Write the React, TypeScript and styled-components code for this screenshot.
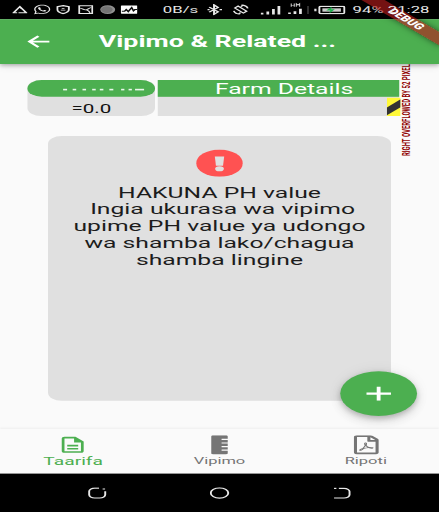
import React from 'react';
import styled, { createGlobalStyle } from 'styled-components';
import { MdOutlineDescription } from 'react-icons/md';
import { FaRegFilePdf, FaRulerVertical, FaWhatsapp } from 'react-icons/fa';

const GREEN = '#4caf50';
const GREY = '#e0e0e0';

const GlobalStyle = createGlobalStyle`
  body { margin: 0; background: #fafafa; overflow: hidden; }
  * { box-sizing: border-box; }
  svg { display: block; flex: none; }
`;

const Viewport = styled.div`
  width: 439px;
  height: 512px;
  overflow: hidden;
`;

/* The device screen is 320x640 logical pixels, stretched to fill the viewport. */
const Screen = styled.div`
  position: relative;
  width: 320px;
  height: 640px;
  display: flex;
  flex-direction: column;
  overflow: hidden;
  background: #fafafa;
  font-family: Roboto, 'Noto Sans', sans-serif;
  transform: scale(1.371875, 0.8);
  transform-origin: 0 0;
`;

const StatusBar = styled.header`
  flex: none;
  height: 24px;
  display: flex;
  align-items: center;
  background: #000;
  color: #e8e8e8;
`;

const StatusItem = styled.div<{ $w: number; $gap: number }>`
  flex: none;
  width: ${(p) => p.$w}px;
  margin-left: ${(p) => p.$gap}px;
  display: flex;
  justify-content: center;
  font-size: 12.2px;
  line-height: 24px;
  white-space: nowrap;
`;

const FrontItem = styled(StatusItem)`
  position: relative;
  z-index: 6;
`;

const AppBar = styled.div`
  position: relative;
  z-index: 2;
  flex: none;
  height: 56px;
  display: grid;
  grid-template-columns: 56px 1fr 56px;
  align-items: center;
  justify-items: center;
  background: ${GREEN};
  color: #fff;
  box-shadow: 0 2px 4px rgba(0, 0, 0, 0.28), 0 1px 8px rgba(0, 0, 0, 0.12);
`;

const Title = styled.h1`
  margin: 0 3px 0 0;
  font-size: 19.5px;
  font-weight: 700;
  white-space: nowrap;
`;

const Body = styled.main`
  flex: 1;
  min-height: 0;
  padding-top: 20px;
`;

const Table = styled.div`
  position: relative;
  display: flex;
  width: 271.5px;
  margin-left: 20px;
  height: 45px;
  gap: 1.4px;
`;

const Column = styled.section<{ $w: number; $round?: boolean }>`
  flex: none;
  width: ${(p) => p.$w}px;
  background: ${GREY};
  border-radius: ${(p) => (p.$round ? '10px' : '0')};
`;

const ColumnHead = styled.div<{ $round?: boolean }>`
  height: 21.3px;
  display: flex;
  align-items: center;
  justify-content: center;
  background: ${GREEN};
  color: #fff;
  font-size: 18px;
  line-height: 21px;
  border-radius: ${(p) => (p.$round ? '10.6px' : '0')};
`;

const HeadText = styled.span`
  padding-left: 8px;
`;

const Cell = styled.div`
  height: 23.7px;
  padding-top: 6px;
  display: flex;
  align-items: center;
  justify-content: center;
  color: #111;
  font-size: 15px;
`;

const OverflowStripe = styled.svg`
  position: absolute;
  right: 0;
  bottom: 0;
`;

const OverflowLabel = styled.div`
  position: absolute;
  left: 273px;
  top: -28px;
  height: 123px;
  writing-mode: vertical-rl;
  transform: rotate(180deg);
  color: #900000;
  font-size: 7.5px;
  font-weight: 700;
  line-height: 7px;
  white-space: nowrap;
`;

const Card = styled.section`
  width: 250px;
  height: 331px;
  margin: 25px auto 0;
  padding-top: 17px;
  display: flex;
  flex-direction: column;
  align-items: center;
  background: ${GREY};
  border-radius: 10px;
`;

const Message = styled.p`
  margin: 9px 0 0;
  color: #1c1c1c;
  font-size: 18px;
  line-height: 21px;
  text-align: center;
  white-space: pre;
`;

const Fab = styled.button`
  position: absolute;
  z-index: 3;
  left: 248px;
  top: 464px;
  width: 56px;
  height: 56px;
  padding: 0;
  border: 0;
  border-radius: 50%;
  display: flex;
  align-items: center;
  justify-content: center;
  background: ${GREEN};
  box-shadow: 0 3px 5px rgba(0, 0, 0, 0.18), 0 6px 10px rgba(0, 0, 0, 0.12), 0 1px 14px rgba(0, 0, 0, 0.07);
`;

const Tabs = styled.nav`
  flex: none;
  height: 56px;
  display: grid;
  grid-template-columns: repeat(3, 1fr);
  background: #fafafa;
  box-shadow: 0 -1px 2px rgba(0, 0, 0, 0.06);
`;

const Tab = styled.a<{ $active?: boolean }>`
  display: flex;
  flex-direction: column;
  align-items: center;
  padding-top: 8px;
  color: ${(p) => (p.$active ? GREEN : '#757575')};
  font-size: ${(p) => (p.$active ? 14 : 12)}px;
`;

const TabLabel = styled.span`
  line-height: 16px;
`;

const SystemBar = styled.footer`
  flex: none;
  height: 48px;
  padding: 0 17.5px;
  display: grid;
  grid-template-columns: 107px 1fr 107px;
  align-items: center;
  justify-items: center;
  background: #000;
`;

const Ribbon = styled.div`
  position: absolute;
  z-index: 5;
  left: 320px;
  top: 0;
  width: 80px;
  height: 12px;
  transform-origin: 0 0;
  transform: rotate(45deg) translate(-40px, 28px);
  background: rgba(183, 28, 28, 0.63);
  box-shadow: 0 0 6px rgba(0, 0, 0, 0.5);
  color: #fff;
  font-size: 10.2px;
  font-weight: 900;
  line-height: 12px;
  text-align: center;
`;

const DASHES: [number, number][] = [
  [0, 2.9], [6.5, 2.6], [13.2, 2.6], [19.8, 2.6], [25, 2.6], [31.5, 2.9], [39.5, 2.4], [44.6, 2.4], [49, 6.6],
];

const stroke = { fill: 'none', stroke: '#e8e8e8', strokeWidth: 1.4 };

const App: React.FC = () => (
  <Viewport>
    <GlobalStyle />
    <Screen>
      <StatusBar>
        <StatusItem $w={11} $gap={8.6}>
          <svg width="11" height="12" viewBox="0 0 11 12"><path d="M1 9.8 5.5 2.2 10 9.8M0 10h3.5M4.5 10H11M5 2l2 3.2" {...stroke} /></svg>
        </StatusItem>
        <StatusItem $w={12} $gap={4.9}><FaWhatsapp size={13.5} /></StatusItem>
        <StatusItem $w={10} $gap={4.7}>
          <svg width="10" height="12" viewBox="0 0 10 12"><path d="M5 1 9.2 2.4V6c0 2.5-1.8 4.2-4.2 5C2.6 10.2.8 8.5.8 6V2.4Z" {...stroke} /><path d="M3.3 6.7h3.4M4 4.7h2" {...stroke} strokeWidth=".8" /></svg>
        </StatusItem>
        <StatusItem $w={11} $gap={5.6}>
          <svg width="11" height="12" viewBox="0 0 11 12"><path d="M.7 1.2h9.6v9.6H.7Z" {...stroke} /><path d="M1.5 4.5c2 0 2 1.8 3.8 1.8S7.5 4 9.5 3.6M6 6.3c1.4.5 2.2 1.8 2.6 3.8" {...stroke} strokeWidth="1.1" /></svg>
        </StatusItem>
        <StatusItem $w={11} $gap={5}>
          <svg width="11" height="12" viewBox="0 0 11 12"><circle cx="5.5" cy="6" r="5.5" fill="#909090" /><circle cx="4.9" cy="6" r="4.2" fill="#747474" /></svg>
        </StatusItem>
        <StatusItem $w={12.5} $gap={4}>
          <svg width="12.5" height="12" viewBox="0 0 12.5 12"><rect y=".8" width="12.5" height="10.4" rx=".8" fill="#fff" /><path d="M.8 8h2l1.2-2 1.5 2.5L8 3.5l1.3 4 1-1.5h1.8" fill="none" stroke="#111" strokeWidth="1.3" /></svg>
        </StatusItem>
        <StatusItem $w={25} $gap={18.8}>0B/s</StatusItem>
        <StatusItem $w={11} $gap={6.5}>
          <svg width="11" height="14" viewBox="0 0 11 14"><path d="m1.5 3.8 6.5 6L5 13V1l3 3.2-6.5 6M.2 7h1.6M9 7h1.8" {...stroke} strokeWidth="1.4" /></svg>
        </StatusItem>
        <StatusItem $w={13} $gap={7}>
          <svg width="13" height="14" viewBox="0 0 13 14"><path d="M4.6 2.6 10.8 9 8.4 11.4 2.2 5ZM7 1.4c2.3 0 4 1.5 4.6 4M6 12.6c-2.3 0-4-1.5-4.6-4M6.6 3.2 8.6 1M6.4 10.8 4.4 13" {...stroke} strokeWidth="1.3" /></svg>
        </StatusItem>
        <StatusItem $w={15} $gap={8.5}>
          <svg width="15" height="13" viewBox="0 0 15 13"><path d="M0 10h2v2H0ZM4.2 8.5h2V12h-2ZM8.3 5.2h2V12h-2ZM12.3 1.5h2V12h-2Z" fill="#e8e8e8" /></svg>
        </StatusItem>
        <StatusItem $w={16} $gap={4.5}>
          <svg width="16" height="18" viewBox="0 0 16 18"><path d="M0 12.5h2v2H0ZM4 11h2v3.5H4ZM8 8h2v6.5H8Z" fill="#e8e8e8" /><path d="M2.3 1.5v4M4.5 1.5v4M2.3 3.5h2.2M6 5.5v-4l1.2 2 1.2-2v4" fill="none" stroke="#ccc" strokeWidth=".8" /><path d="M13.8 4.5h1.4v10h-1.4Z" fill="#333" /></svg>
        </StatusItem>
        <StatusItem $w={23} $gap={3.5}>
          <svg width="23" height="11" viewBox="0 0 23 11"><path d="M0 4h1.7v3H0Z" fill="#ddd" /><rect x="3.8" y="1" width="18.2" height="9" rx="1" {...stroke} /><rect x="6" y="3.4" width="13.5" height="4.2" fill="#ccc" /><path d="m12.8 1.5-4 4.7h3l-.7 3.3 4-4.8h-2.8Z" fill="#19b04a" /></svg>
        </StatusItem>
        <StatusItem $w={23} $gap={4.8}>94%</StatusItem>
        <FrontItem $w={30} $gap={3}>21:28</FrontItem>
      </StatusBar>

      <AppBar>
        <svg width="18" height="18" viewBox="0 0 18 18"><path d="M17 9H2.4M9 2.2 2.4 9 9 15.8" fill="none" stroke="#fff" strokeWidth="2.1" /></svg>
        <Title>Vipimo &amp; Related ...</Title>
      </AppBar>

      <Body>
        <Table>
          <Column $w={93.3} $round>
            <ColumnHead $round>
              <svg width="93" height="21" viewBox="0 0 93 21">
                {DASHES.map(([x, w]) => (
                  <rect key={x} x={26 + x * 1.07} y="11" width={w} height="2" fill="#e9f6ea" />
                ))}
              </svg>
            </ColumnHead>
            <Cell>=0.0</Cell>
          </Column>
          <Column $w={176.8}>
            <ColumnHead>
              <HeadText>Farm Details</HeadText>
            </ColumnHead>
          </Column>
          <OverflowStripe width="10" height="23.5" viewBox="0 0 10 23.5">
            <path d="M0 0h10v23.5H0Z" fill="#fff838" />
            <path d="M0 12.5 10 2v10L0 22Z" fill="#333" />
          </OverflowStripe>
          <OverflowLabel>RIGHT OVERFLOWED BY 52 PIXELS</OverflowLabel>
        </Table>

        <Card>
          <svg width="34" height="34" viewBox="0 0 34 34">
            <circle cx="17" cy="17" r="17" fill="#ff5252" />
            <path d="M13.6 8.5h6.8l-.8 11.8h-5.2Z" fill={GREY} />
            <circle cx="17" cy="24" r="3.2" fill={GREY} />
          </svg>
          <Message>{'HAKUNA PH value\n Ingia ukurasa wa vipimo\nupime PH value ya udongo\nwa shamba lako/chagua\nshamba lingine'}</Message>
        </Card>
      </Body>

      <Tabs>
        <Tab $active>
          <MdOutlineDescription size={24} />
          <TabLabel>Taarifa</TabLabel>
        </Tab>
        <Tab>
          <FaRulerVertical size={24} />
          <TabLabel>Vipimo</TabLabel>
        </Tab>
        <Tab>
          <FaRegFilePdf size={24} />
          <TabLabel>Ripoti</TabLabel>
        </Tab>
      </Tabs>

      <SystemBar>
        <svg width="14" height="15" viewBox="0 0 14 15"><path d="M8.2 1.2H5a4 4 0 0 0-4 4v4.3a4 4 0 0 0 4 4h3.7a4 4 0 0 0 4-4V5M10.8 2.3h1.8" {...stroke} /></svg>
        <svg width="15" height="15" viewBox="0 0 15 15"><circle cx="7" cy="7.3" r="6.4" {...stroke} /></svg>
        <svg width="13" height="15" viewBox="0 0 13 15"><path d="M4 1.5h3.8a4 4 0 0 1 4 4v4a4 4 0 0 1-4 4H.5M.5 1.5h1.7" {...stroke} /></svg>
      </SystemBar>

      <Fab aria-label="+">
        <svg width="18" height="18" viewBox="0 0 18 18"><path d="M9 0v18M0 9h18" stroke="#fff" strokeWidth="2.8" /></svg>
      </Fab>
      <Ribbon>DEBUG</Ribbon>
    </Screen>
  </Viewport>
);

export default App;
